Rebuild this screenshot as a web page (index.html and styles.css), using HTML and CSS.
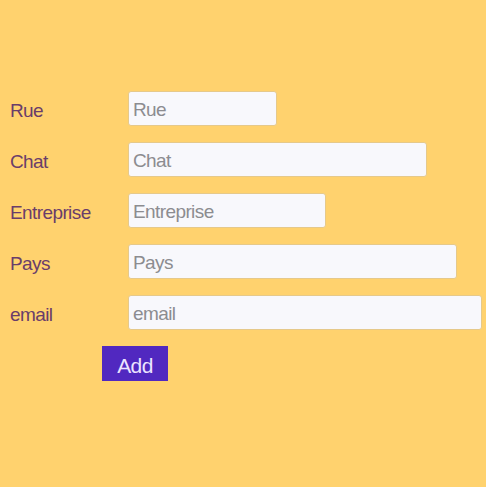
FILE: index.html
```html
<!DOCTYPE html>
<html>
<head>
<meta charset="utf-8">
<link rel="stylesheet" href="styles.css">
</head>
<body>
<form class="form">
  <div class="row"><label class="label">Rue</label><input class="field w-rue" placeholder="Rue"></div>
  <div class="row"><label class="label">Chat</label><input class="field w-chat" placeholder="Chat"></div>
  <div class="row"><label class="label">Entreprise</label><input class="field w-ent" placeholder="Entreprise"></div>
  <div class="row"><label class="label">Pays</label><input class="field w-pays" placeholder="Pays"></div>
  <div class="row"><label class="label">email</label><input class="field w-email" placeholder="email"></div>
  <div class="actions"><button type="button" class="add">Add</button></div>
</form>
</body>
</html>
```
FILE: styles.css
```css
html, body {
  margin: 0;
  padding: 0;
  background: #ffd26e;
  height: 100%;
}
body {
  font-family: "Liberation Sans", Arial, sans-serif;
}
.form {
  display: flex;
  flex-direction: column;
  gap: 16px;
  padding: 91px 0 0 10px;
}
.row {
  display: flex;
  align-items: center;
  height: 35px;
}
.label {
  width: 118px;
  font-size: 19px;
  color: #6a3d6a;
  padding-top: 4px;
  letter-spacing: -0.6px;
}
.field {
  box-sizing: border-box;
  height: 35px;
  margin: 0;
  padding: 2px 4px 0;
  border: 1px solid #e6c98a;
  border-radius: 3px;
  background: #f8f8fc;
  font-family: "Liberation Sans", Arial, sans-serif;
  font-size: 19px;
  letter-spacing: -0.6px;
  color: #333;
  outline: none;
}
.field::placeholder {
  color: #8c8c90;
}
.w-rue { width: 149px; }
.w-chat { width: 299px; }
.w-ent { width: 198px; }
.w-pays { width: 329px; }
.w-email { width: 354px; }
.actions {
  display: flex;
  padding-left: 92px;
}
.add {
  width: 66px;
  height: 35px;
  margin: 0;
  border: none;
  border-radius: 0;
  background: #5128c0;
  color: #ece4ff;
  font-family: "Liberation Sans", Arial, sans-serif;
  font-size: 21px;
  letter-spacing: -0.6px;
  padding: 4px 0 0;
}
```
